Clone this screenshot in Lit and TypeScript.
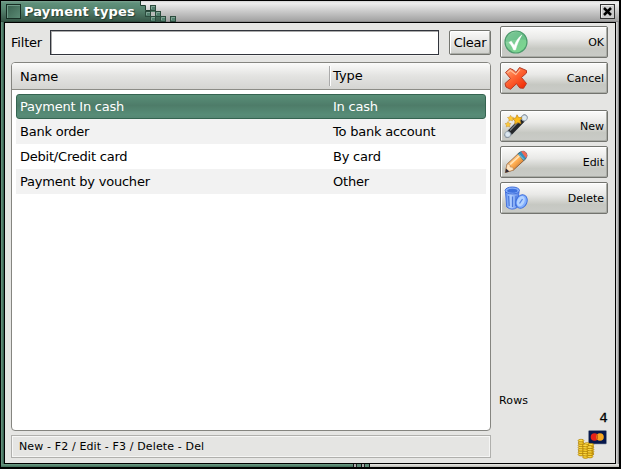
import { LitElement, html, css, svg } from "lit";
import { customElement } from "lit/decorators.js";
import { classMap } from "lit/directives/class-map.js";

const icons = {
  ok: svg`<defs><linearGradient id="g" x2="1" y2="1"><stop stop-color="#a5dfb4"/><stop offset=".5" stop-color="#79cc91"/><stop offset="1" stop-color="#7fdc90"/></linearGradient></defs>
    <circle cx="12" cy="12" r="11" fill="url(#g)" stroke="#4d9b6d" stroke-width="1.2"/>
    <path d="M1.700 12C3-1 21-1 22 10C16 9 9 10 1.700 12Z" fill="#5bb481" opacity=".5"/>
    <path d="M5 12.500L7.200 11.200L10.300 15.500C12 11 14.500 7.500 17.800 5C15 10 13 14.500 11.500 20L9.600 20C8.500 17 7 14.500 5 12.500Z" fill="#fff" stroke="#fff" stroke-width=".5"/>`,
  cancel: svg`<defs><linearGradient id="r" x2=".8" y2="1"><stop stop-color="#ffb080"/><stop offset=".45" stop-color="#ff6a38"/><stop offset="1" stop-color="#f02b05"/></linearGradient></defs>
    <path d="M1.500 6.500L6 2.500L9.500 4L12 6.500L15.500 1.500L22.500 4.500V7L17.500 11.500L22.500 17.500L19.500 22.300L15.800 22L12.500 17.700L6.500 23.300L2 21L1 17.500L6.500 12.500Z" fill="url(#r)" stroke="#b43b26" stroke-width="1"/>
    <path d="M3.500 6.700L6.300 4.300L11.800 8.500L16 3.500" fill="none" stroke="#ffc29e" stroke-width="1.100"/>`,
  wand: svg`<path d="M3.500 21L20.500 3.500" stroke="#737982" stroke-width="6" stroke-linecap="round"/>
    <path d="M6.200 18.300L18 6.200" stroke="#24272a" stroke-width="5.500"/>
    <path d="M6 16.500L17 5" stroke="#777d80" stroke-width="1.300"/>
    <circle cx="3.700" cy="20.400" r="2.900" fill="#dbe7f0" stroke="#8a9aa7" stroke-width=".7"/><circle cx="20.400" cy="3.900" r="2.900" fill="#dce8ee" stroke="#8a9aa7" stroke-width=".7"/>
    <path d="M13 .8L14.600 3.500L18 3.800L16 6.400L17 9.500L13.700 8.600L10.800 10.300L11 6.900L8.500 4.700L11.800 3.900Z" fill="#fdbc18" stroke="#bd8518" stroke-width=".7"/>
    <path d="M6.500 1.200L7.600 3L9.600 3.300L8.300 4.900L8.700 7L6.700 6.200L4.800 7.200L5 5L3.400 3.500L5.600 3.100ZM4 7.500L5 9.200L7 9.600L5.600 11L5.800 13L4 12.200L2.200 13L2.500 11L1 9.600L3.100 9.200Z" fill="#ffca38" stroke="#c5963c" stroke-width=".5"/>`,
  pencil: svg`<defs><linearGradient id="o" x2="1" y2="1"><stop offset=".25" stop-color="#ffd39b"/><stop offset=".5" stop-color="#ffad50"/><stop offset=".75" stop-color="#c77835"/></linearGradient></defs>
    <path d="M1.300 22.500L3.200 14L15.500 2.400L21.800 8.700L9.500 20Z" fill="url(#o)" stroke="#80502c" stroke-width=".8"/>
    <path d="M3.200 14L5.800 14.300L6.300 17L8.800 17.300L9.500 20L1.300 22.500Z" fill="#ffe5c1" stroke="#b07947" stroke-width=".5"/>
    <path d="M1.200 22.800L2.100 18.500L5.400 21.500Z" fill="#2e2938"/><path d="M6.200 14.500L17 4.500" stroke="#ffe5bb" stroke-width="1.500"/>
    <path d="M14 3.800L17 1.500Q20 .2 22.400 3Q24 6 22 8.200L19.700 10.500Z" fill="#368fbd" stroke="#27657f" stroke-width=".7"/>
    <path d="M17 1.500Q20 .2 22.400 3Q24 6 22 8.200Z" fill="#ef6a57"/><path d="M14.700 4.200L20 9.600" stroke="#8bd5ed" stroke-width="1"/>`,
  trash: svg`<defs><linearGradient id="b"><stop stop-color="#5b90f2"/><stop offset=".4" stop-color="#b4d1ff"/><stop offset="1" stop-color="#4f7fe8"/></linearGradient></defs>
    <path d="M1.500 6L2.700 21Q8 25 13 21.500L15 6Z" fill="url(#b)" stroke="#3f6cdc" stroke-width=".9"/>
    <path d="M4.600 10L5.200 20M8.500 10.500V21M12 10L11.600 20" stroke="#4b78da" stroke-width="1.200"/>
    <ellipse cx="8.300" cy="4.500" rx="7.200" ry="3.500" fill="#88b1fc" stroke="#416ed9" stroke-width="1"/><ellipse cx="8.300" cy="4.800" rx="5.200" ry="2" fill="#3f72de"/>
    <ellipse cx="17.500" cy="15.500" rx="5.400" ry="7" transform="rotate(25 17.500 15.500)" fill="#83b0ff" stroke="#3c6edc" stroke-width="1"/>
    <ellipse cx="16.800" cy="15.300" rx="3.600" ry="5.400" transform="rotate(25 17 15.300)" fill="#b4d3ff"/><path d="M15.500 17.500L18.500 13" stroke="#5786e5" stroke-width="1.300"/>`,
};

const actions: { id: keyof typeof icons; label: string }[] = [
  { id: "ok", label: "OK" },
  { id: "cancel", label: "Cancel" },
  { id: "wand", label: "New" },
  { id: "pencil", label: "Edit" },
  { id: "trash", label: "Delete" },
];

const rows = [
  ["Payment In cash", "In cash"],
  ["Bank order", "To bank account"],
  ["Debit/Credit card", "By card"],
  ["Payment by voucher", "Other"],
];

const coin = (x: number, y: number) => svg`<ellipse cx=${x} cy=${y} rx="2.900" ry="1.400" fill="#f6c51c" stroke="#a87c0a" stroke-width=".7"/><path d=${`M${x - 1.8} ${y - 0.4}H${x + 1}`} stroke="#ffec72" stroke-width=".8"/>`;
const stack = (x: number, base: number, n: number) => Array.from({ length: n }, (_, i) => coin(x, base - i * 2.3));
const block = (x: number, y: number) => svg`<rect x=${x + 0.5} y=${y + 0.5} width="5" height="5" fill="#52806e" stroke="#2b4b3d"/><path d=${`M${x + 1.5} ${y + 4}V${y + 1.5}H${x + 5}`} stroke="#81a596" fill="none"/>`;

@customElement("app-root")
export class AppRoot extends LitElement {
  static styles = css`
    :host { display: block; width: 621px; height: 469px; font: 13px "DejaVu Sans", sans-serif; color: #000; }
    * { box-sizing: border-box; }
    .window { width: 621px; height: 469px; background: #000; display: grid; grid-template: 21px 1fr 3px / 3px 1fr 3px; padding: 1px 2px 2px 1px; }
    .title { grid-column: 1 / -1; height: 21px; display: flex; align-items: center; justify-content: space-between;
      background: linear-gradient(#d4d4d4 0, #eeeeee 2px, #dcdcdc 6px, #a2a2a2 20px, #777 21px); }
    .caption { display: flex; height: 21px; width: 139px; align-items: center; padding-left: 5px;
      background: linear-gradient(#7da392 0, #60917b 2px, #578570 8px, #365647 20px, #263e33); color: #fff; font-weight: bold; font-size: 13px; }
    .caption span { margin-left: 3px; line-height: 20px; white-space: nowrap; letter-spacing: .15px; text-shadow: 1px 1px 1px #263e34; }
    .menu { width: 15px; height: 15px; flex: none; background: linear-gradient(135deg, #38604e, #5b8b75); border: 1px solid #172e24; box-shadow: inset 1px 1px #6f9b88; }
    .blocks { width: 40px; height: 21px; flex: none; margin-right: auto; }
    .close { width: 15px; height: 15px; margin-right: 4px; }
    .left { background: linear-gradient(90deg, #6c9884, #4b7864 60%, #31594a); }
    .right { background: linear-gradient(90deg, #d8d8d8, #bbb 50%, #777); }
    .bottom { grid-column: 1 / -1; display: flex; background: linear-gradient(#e9e9e5, #b8b8b2); }
    .green { width: 352px; background: linear-gradient(#6c9c85, #426e5a); }
    .bits { width: 17px; background: repeating-linear-gradient(90deg, #111 0 1px, #aaa 1px 3px, #222 3px 4px, #5d8a76 4px 8px); }
    .body { background: #e5e5e3; border: 1px solid #000; display: grid; grid-template-columns: 480px 108px; column-gap: 9px; padding: 3px 6px 4px; }
    .main { display: flex; flex-direction: column; }
    .filter { display: flex; height: 25px; margin: 4px 0 7px; align-items: center; }
    .filter label { width: 39px; letter-spacing: -.2px; }
    .field { width: 389px; height: 25px; margin-right: 10px; border: 1px solid #31343c; background: #fff; box-shadow: inset 1px 1px #aaa, 0 1px #f1f1f0; }
    .btn { border: 1px solid #73746f; border-radius: 2px; background: linear-gradient(#fbfbfa, #e9e9e7 38%, #c6c8c2 72%, #cacbc7); box-shadow: inset 1px 1px #fff, inset -1px -1px #aaaca6; color: #000; }
    .clear { width: 42px; height: 25px; font-size: 13px; line-height: 24px; letter-spacing: -.3px; text-align: center; background: linear-gradient(#fafaf9, #e4e4e2 55%, #d0d1cd); }
    .list { height: 369px; border: 1px solid #858580; border-radius: 4px; background: #fff; overflow: hidden; }
    .head { display: grid; grid-template-columns: 317px 1fr; height: 27px; align-items: center; background: linear-gradient(#fbfbfa, #e3e3e1 50%, #d5d5d2); border-bottom: 1px solid #8c8c86; line-height: 25px; }
    .head span:first-child { padding-left: 8px; }
    .head span:last-child { padding-left: 3px; height: 20px; line-height: 20px; border-left: 1px solid #aaa; box-shadow: inset 1px 0 #fff; }
    .rows { padding: 4px; }
    .row { display: grid; grid-template-columns: 313px 1fr; height: 25px; line-height: 26px; padding-left: 4px; letter-spacing: -.22px; }
    .row.alt { background: #f2f2f2; }
    .row.selected { color: #fff; padding-left: 3px; border: 1px solid #356451; border-radius: 3px; line-height: 24px; background: linear-gradient(#598f78, #4e7c69 45%, #578c77 85%, #568774); }
    .status { height: 23px; margin-top: 4px; padding-left: 7px; border: 1px solid #b0b0ad; box-shadow: inset 1px 1px #f7f7f6, inset -1px -1px #f5f5f4; font-size: 11px; line-height: 21px; letter-spacing: .13px; }
    .side { display: flex; flex-direction: column; }
    .action { height: 32px; margin-bottom: 4px; display: flex; align-items: center; justify-content: space-between; padding: 0 3px 0 3px; font-size: 11px; }
    .action.gap { margin-top: 12px; }
    .action svg { width: 24px; height: 24px; }
    .action span { line-height: 30px; padding-top: 1px; }
    .summary { margin-top: auto; height: 64px; font-size: 11px; line-height: 12px; display: flex; flex-direction: column; margin-left: -1px; letter-spacing: .15px; }
    .count { text-align: right; padding-top: 5px; font-size: 13px; line-height: 11px; -webkit-text-stroke: .3px #000; }
    .money { width: 32px; height: 32px; flex: none; align-self: flex-end; margin-top: 3px; overflow: visible; }
  `;

  render() {
    return html`<div class="window">
      <div class="title">
        <div class="caption"><i class="menu"></i><span>Payment types</span></div>
        <svg class="blocks" viewBox="0 0 40 21">
          <defs><linearGradient id="edge" gradientUnits="userSpaceOnUse" x1="0" y1="0" x2="0" y2="21"><stop stop-color="#60917b"/><stop offset=".4" stop-color="#578570"/><stop offset="1" stop-color="#365647"/></linearGradient></defs>
          <path d="M0 0V21H20V15H15V10H10V9.500H5V4.500H.5V0Z" fill="url(#edge)"/><path d="M.5 0V4.500H5.500V9.500H10" stroke="#203e31" fill="none"/><rect x="11" y="11" width="4" height="4" fill="#b9bbba"/>${block(10, 4)}${block(5, 10)}${block(15, 10)}${block(10, 15)}${block(20, 15)}${block(30, 15)}</svg>
        <svg class="close" viewBox="0 0 15 15"><rect x=".5" y=".5" width="14" height="14" fill="#ccc" stroke="#333"/><path d="M1.500 13V1.500H13" stroke="#eee" fill="none"/><path d="M4 4L11 11M11 4L4 11" stroke="#000" stroke-width="2.500"/></svg>
      </div>
      <div class="left"></div>
      <div class="body">
        <div class="main">
          <div class="filter"><label>Filter</label><div class="field"></div><div class="btn clear">Clear</div></div>
          <div class="list">
            <div class="head"><span>Name</span><span>Type</span></div>
            <div class="rows">${rows.map((r, i) => html`<div class=${classMap({ row: true, selected: i === 0, alt: i % 2 === 1 })}><span>${r[0]}</span><span>${r[1]}</span></div>`)}</div>
          </div>
          <div class="status">New - F2 / Edit - F3 / Delete - Del</div>
        </div>
        <div class="side">
          ${actions.map((a, i) => html`<div class=${classMap({ btn: true, action: true, gap: i === 2 })}><svg viewBox="0 0 24 24">${icons[a.id]}</svg><span>${a.label}</span></div>`)}
          <div class="summary"><span>Rows</span><span class="count">4</span>
            <svg class="money" viewBox="0 0 32 32"><rect x="12.500" y="4.500" width="18" height="13.500" rx="1" fill="#07184d" stroke="#87919e" stroke-width=".6"/><circle cx="18.500" cy="11" r="3.800" fill="#e52218"/><circle cx="24" cy="11" r="3.800" fill="#f6a721"/><path d="M21.200 8.500V13.500" stroke="#b94d16" stroke-width="1.200"/>
              ${stack(5, 28.5, 7)}${stack(11, 25, 4)}${stack(15, 28, 5)}${stack(9.5, 31, 6)}${stack(14, 30.5, 5)}</svg>
          </div>
        </div>
      </div>
      <div class="right"></div>
      <div class="bottom"><div class="green"></div><div class="bits"></div></div>
    </div>`;
  }
}
